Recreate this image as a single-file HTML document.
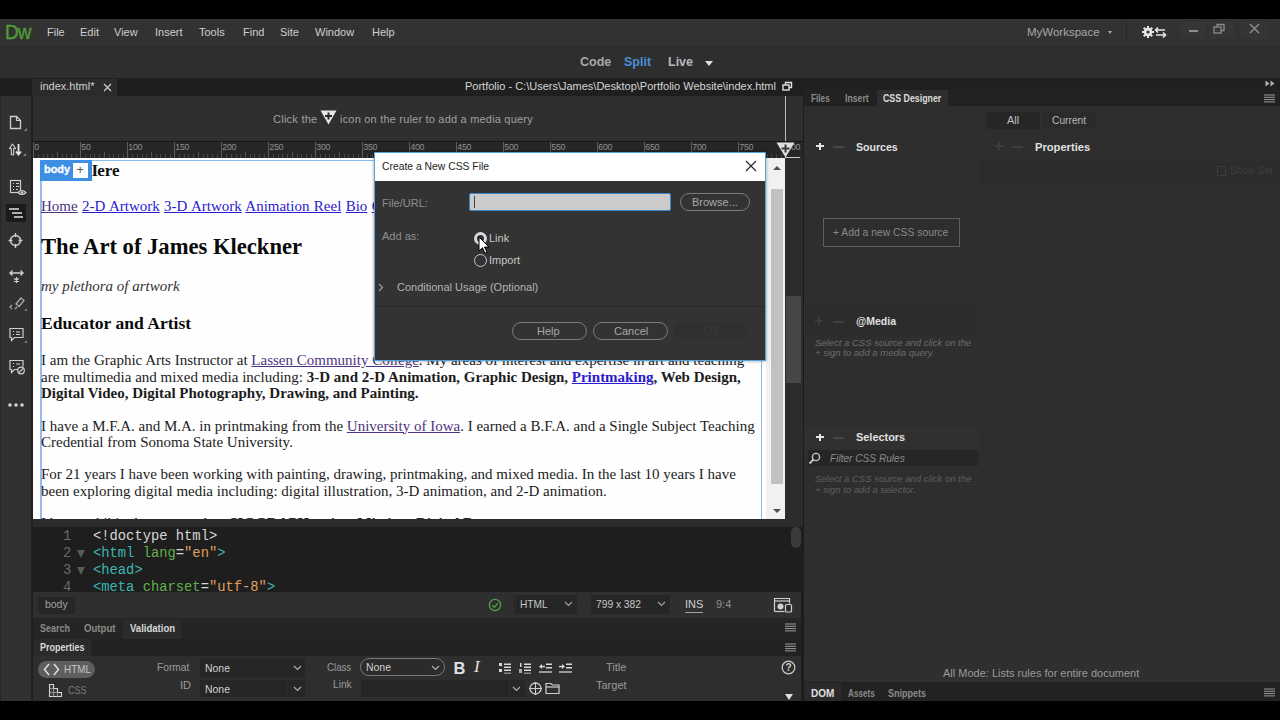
<!DOCTYPE html>
<html><head><meta charset="utf-8">
<style>
*{margin:0;padding:0;box-sizing:border-box}
html,body{width:1280px;height:720px;overflow:hidden;background:#000;font-family:"Liberation Sans",sans-serif;position:relative}
.a{position:absolute}
.t{position:absolute;white-space:nowrap;line-height:1}
.menu{color:#cfcfcf;font-size:11px;top:27px}
.tb{font-size:12.5px;font-weight:bold;top:56px}
.serif{font-family:"Liberation Serif",serif}
.dl{position:absolute;white-space:nowrap;left:8px;font-size:15px;line-height:1;color:#1c1c1c}
.dl a{color:#2a1ad0;text-decoration:underline}
.dl a.v{color:#4e3480}
.mono{font-family:"Liberation Mono",monospace}
.cl{position:absolute;left:61px;white-space:nowrap;font-size:13.8px;line-height:1;color:#d6d6d6}
.ln{position:absolute;white-space:nowrap;font-size:13.8px;line-height:1;color:#6a6a6a}
.tg{color:#3db5b0}.at{color:#62b04a}.vl{color:#e0a05a}
.ptab{font-size:10px;font-weight:bold;color:#8a8a8a}
.plab{font-size:11px;color:#9a9a9a}
.sel{position:absolute;background:#262626}
.ic{position:absolute}
</style></head><body>
<!-- BASE REGIONS -->
<div class="a" style="left:0;top:19px;width:1280px;height:27px;background:#323232"></div>
<div class="a" style="left:0;top:46px;width:1280px;height:32px;background:#2e2e2e"></div>
<div class="a" style="left:0;top:78px;width:32px;height:18px;background:#1f1f1f"></div><div class="a" style="left:0;top:96px;width:32px;height:605px;background:#313131"></div>
<div class="a" style="left:32px;top:78px;width:771px;height:18px;background:#1f1f1f"></div>
<div class="a" style="left:32px;top:96px;width:771px;height:46px;background:#2f2f2f"></div>
<div class="a" style="left:32px;top:142px;width:771px;height:16px;background:#262626"></div>
<div class="a" style="left:785px;top:158px;width:18px;height:361px;background:#2c2c2c"></div>
<div class="a" style="left:32px;top:519px;width:771px;height:8px;background:#2b2b2b"></div>
<div class="a" style="left:32px;top:527px;width:771px;height:65px;background:#1e1e1e"></div>
<div class="a" style="left:32px;top:592px;width:771px;height:26px;background:#2f2f2f"></div>
<div class="a" style="left:32px;top:618px;width:771px;height:21px;background:#252525"></div>
<div class="a" style="left:32px;top:639px;width:771px;height:17px;background:#222"></div>
<div class="a" style="left:32px;top:656px;width:771px;height:45px;background:#2e2e2e"></div>
<div class="a" style="left:801px;top:592px;width:2px;height:109px;background:#1c1c1c"></div>
<div class="a" style="left:803px;top:78px;width:477px;height:623px;background:#2e2e2e"></div>
<!-- MENU BAR -->
<div class="t" style="left:5px;top:21px;font-size:21px;color:#4f9c3a;letter-spacing:-1px;-webkit-text-stroke:0.4px #4f9c3a;transform:scaleX(0.9);transform-origin:0 0">Dw</div>
<div class="t menu" style="left:47px">File</div>
<div class="t menu" style="left:80px">Edit</div>
<div class="t menu" style="left:114px">View</div>
<div class="t menu" style="left:155px">Insert</div>
<div class="t menu" style="left:199px">Tools</div>
<div class="t menu" style="left:243px">Find</div>
<div class="t menu" style="left:280px">Site</div>
<div class="t menu" style="left:315px">Window</div>
<div class="t menu" style="left:372px">Help</div>
<div class="t menu" style="left:1027px;color:#a8a8a8;font-size:11.5px">MyWorkspace</div>
<div class="a" style="left:1108px;top:31px;width:0;height:0;border-left:2.5px solid transparent;border-right:2.5px solid transparent;border-top:3px solid #aaa"></div>
<div class="a" style="left:1126px;top:22px;width:1px;height:18px;background:#262626"></div>
<svg class="a" style="left:1141px;top:25px" width="26" height="14" viewBox="0 0 26 14">
 <g fill="#e6e6e6"><circle cx="7" cy="7" r="4.2"/>
 <rect x="6" y="1" width="2" height="12"/><rect x="1" y="6" width="12" height="2"/>
 <rect x="6" y="1" width="2" height="12" transform="rotate(45 7 7)"/><rect x="6" y="1" width="2" height="12" transform="rotate(-45 7 7)"/></g>
 <circle cx="7" cy="7" r="1.6" fill="#323232"/>
 <g stroke="#e6e6e6" stroke-width="1.6" fill="none"><path d="M15 5h9M17 2.5l-2.5 2.5 2.5 2.5M15 10h9M22 7.5l2.5 2.5-2.5 2.5"/></g>
</svg>
<div class="a" style="left:1181px;top:21px;width:25px;height:17px;background:#353535"></div>
<div class="a" style="left:1209px;top:21px;width:25px;height:17px;background:#353535"></div>
<div class="a" style="left:1241px;top:21px;width:28px;height:17px;background:#353535"></div>
<div class="a" style="left:1189px;top:30px;width:9px;height:2px;background:#8c8c8c"></div>
<svg class="a" style="left:1213px;top:23px" width="13" height="12" viewBox="0 0 13 12"><g fill="none" stroke="#8c8c8c" stroke-width="1.3"><rect x="1" y="4" width="7" height="6"/><path d="M4 4V1.5h7v6H8"/></g></svg>
<svg class="a" style="left:1249px;top:23px" width="11" height="11" viewBox="0 0 11 11"><path d="M1 1L10 10M10 1L1 10" stroke="#8c8c8c" stroke-width="1.5"/></svg>

<!-- TOOLBAR -->
<div class="t tb" style="left:580px;color:#a9a9a9">Code</div>
<div class="t tb" style="left:624px;color:#4b8fd6">Split</div>
<div class="t tb" style="left:668px;color:#b9b9b9">Live</div>
<div class="a" style="left:705px;top:61px;width:0;height:0;border-left:4.5px solid transparent;border-right:4.5px solid transparent;border-top:5px solid #e0e0e0"></div>

<!-- TAB BAR -->
<div class="a" style="left:32px;top:79px;width:85px;height:17px;background:#2b2b2b"></div>
<div class="t" style="left:40px;top:81px;font-size:11px;color:#d0d0d0">index.html*</div>
<svg class="a" style="left:103px;top:83px" width="9" height="9" viewBox="0 0 9 9"><path d="M1 1L8 8M8 1L1 8" stroke="#cfcfcf" stroke-width="1.2"/></svg>
<div class="t" style="left:465px;top:81px;font-size:11px;color:#d6d6d6">Portfolio - C:\Users\James\Desktop\Portfolio Website\index.html</div>
<svg class="a" style="left:782px;top:81px" width="11" height="11" viewBox="0 0 11 11"><g fill="none" stroke="#e0e0e0" stroke-width="1.4"><rect x="1" y="4" width="6" height="5"/><path d="M3.5 4V1.5h6v5H7"/></g></svg>

<!-- INFO BAR -->
<div class="t" style="left:273px;top:114px;font-size:11px;color:#a0a0a0;letter-spacing:0.25px">Click the</div>
<svg class="a" style="left:320px;top:110px" width="17" height="15" viewBox="0 0 17 15"><path d="M0.5 0.5H16.5L8.5 14.5Z" fill="#e6e6e6"/><path d="M8.5 2.5v7M5 6h7" stroke="#2b2b2b" stroke-width="2"/></svg>
<div class="t" style="left:340px;top:114px;font-size:11px;color:#a0a0a0;letter-spacing:0.2px">icon on the ruler to add a media query</div>
<div class="a" style="left:785px;top:96px;width:1px;height:50px;background:#bdbdbd"></div>
<!-- LEFT TOOLBAR -->
<div class="a" style="left:31px;top:96px;width:2px;height:605px;background:#1f1f1f"></div><div class="a" style="left:0;top:96px;width:1px;height:605px;background:#262626"></div>
<!-- file icon -->
<svg class="ic" style="left:8px;top:115px" width="22" height="18" viewBox="0 0 22 18"><path d="M2.5 1.5h6l4 4v8h-10z" fill="none" stroke="#cfcfcf" stroke-width="1.3"/><path d="M8.5 1.5v4h4" fill="none" stroke="#cfcfcf" stroke-width="1.1"/><path d="M19 13l-3 3h3z" fill="#8a8a8a"/></svg>
<!-- arrows -->
<svg class="ic" style="left:8px;top:142px" width="22" height="17" viewBox="0 0 22 17"><path d="M4.5 2L1.5 6.5H3.3V12.8H5.7V6.5H7.5Z" fill="none" stroke="#d6d6d6" stroke-width="1.1" stroke-linejoin="round"/><path d="M10.5 2v10M8 9.5l2.5 3 2.5-3" fill="none" stroke="#e6e6e6" stroke-width="1.8"/><path d="M18 11l-3 3h3z" fill="#8a8a8a"/></svg>
<!-- list + eye -->
<svg class="ic" style="left:8px;top:179px" width="20" height="18" viewBox="0 0 20 18"><rect x="2.5" y="1.5" width="10" height="12" fill="none" stroke="#cfcfcf" stroke-width="1.2"/><path d="M5 4.5h1M8 4.5h3M5 7.5h1M8 7.5h3M5 10.5h1M8 10.5h2" stroke="#cfcfcf" stroke-width="1.2"/><path d="M10 13.5q4-4 8 0q-4 4-8 0z" fill="#3a3a3a" stroke="#cfcfcf" stroke-width="1.1"/><circle cx="14" cy="13.5" r="1.3" fill="#cfcfcf"/></svg>
<!-- active: outline -->
<div class="a" style="left:6px;top:204px;width:20px;height:18px;background:#1b1b1b"></div>
<svg class="ic" style="left:6px;top:204px" width="20" height="18" viewBox="0 0 20 18"><path d="M3 5h10M6 9h10M8 13h9" stroke="#e0e0e0" stroke-width="1.6"/></svg>
<!-- crosshair -->
<svg class="ic" style="left:8px;top:231px" width="16" height="19" viewBox="0 0 16 19"><circle cx="7.5" cy="9.5" r="5" fill="none" stroke="#cfcfcf" stroke-width="1.4"/><path d="M7.5 2v4M7.5 13v4M0.5 9.5h4M10.5 9.5h4" stroke="#cfcfcf" stroke-width="1.4"/></svg>
<!-- arrows + asterisk -->
<svg class="ic" style="left:8px;top:269px" width="18" height="15" viewBox="0 0 18 15"><path d="M2 4h13M4.5 1.5L2 4l2.5 2.5M12.5 1.5L15 4l-2.5 2.5" fill="none" stroke="#cfcfcf" stroke-width="1.4"/><path d="M8.5 8v6M6 9.5l5 3M11 9.5l-5 3" stroke="#cfcfcf" stroke-width="1.2"/></svg>
<!-- brush -->
<svg class="ic" style="left:8px;top:295px" width="20" height="17" viewBox="0 0 20 17"><path d="M8 9l5-6 3 2.5-5 6z" fill="none" stroke="#a8a8a8" stroke-width="1.3"/><path d="M4 10l-2 2 2 2M7 14l2-2" fill="none" stroke="#a8a8a8" stroke-width="1.2"/><path d="M19 13l-3 3h3z" fill="#7a7a7a"/></svg>
<!-- comment -->
<svg class="ic" style="left:8px;top:327px" width="20" height="17" viewBox="0 0 20 17"><path d="M2 1.5h13v9H6.5L3.5 13.5v-3H2z" fill="none" stroke="#cfcfcf" stroke-width="1.2"/><path d="M5 4.5h1M5 7.5h1M8 5h4M8 7.5h4" stroke="#cfcfcf" stroke-width="1.2"/><path d="M19 13l-3 3h3z" fill="#7a7a7a"/></svg>
<!-- comment + circle -->
<svg class="ic" style="left:8px;top:359px" width="18" height="16" viewBox="0 0 18 16"><path d="M10 10.5H6.5L3.5 13.5v-3H2V1.5h13v6" fill="none" stroke="#cfcfcf" stroke-width="1.2"/><path d="M5 4.5h1M5 7.5h1M8 5h4" stroke="#cfcfcf" stroke-width="1.2"/><circle cx="13" cy="11.5" r="3.3" fill="none" stroke="#cfcfcf" stroke-width="1.2"/><path d="M11 13.5l4-4" stroke="#cfcfcf" stroke-width="1.1"/></svg>
<!-- dots -->
<svg class="ic" style="left:8px;top:402px" width="16" height="6" viewBox="0 0 16 6"><circle cx="2" cy="3" r="1.8" fill="#d0d0d0"/><circle cx="8" cy="3" r="1.8" fill="#d0d0d0"/><circle cx="14" cy="3" r="1.8" fill="#d0d0d0"/></svg>
<!-- RULER -->
<div class="a" style="left:32px;top:141px;width:771px;height:1px;background:#161616"></div>
<svg class="a" style="left:32px;top:142px" width="771" height="16" viewBox="0 0 771 16">
<line x1="1.5" y1="0" x2="1.5" y2="16" stroke="#5c5c5c" stroke-width="1"/>
<line x1="6.5" y1="12" x2="6.5" y2="16" stroke="#474747" stroke-width="1"/>
<line x1="11.5" y1="12" x2="11.5" y2="16" stroke="#474747" stroke-width="1"/>
<line x1="15.5" y1="12" x2="15.5" y2="16" stroke="#474747" stroke-width="1"/>
<line x1="20.5" y1="12" x2="20.5" y2="16" stroke="#474747" stroke-width="1"/>
<line x1="25.5" y1="10" x2="25.5" y2="16" stroke="#505050" stroke-width="1"/>
<line x1="30.5" y1="12" x2="30.5" y2="16" stroke="#474747" stroke-width="1"/>
<line x1="34.5" y1="12" x2="34.5" y2="16" stroke="#474747" stroke-width="1"/>
<line x1="39.5" y1="12" x2="39.5" y2="16" stroke="#474747" stroke-width="1"/>
<line x1="44.5" y1="12" x2="44.5" y2="16" stroke="#474747" stroke-width="1"/>
<line x1="48.5" y1="0" x2="48.5" y2="16" stroke="#5c5c5c" stroke-width="1"/>
<line x1="53.5" y1="12" x2="53.5" y2="16" stroke="#474747" stroke-width="1"/>
<line x1="58.5" y1="12" x2="58.5" y2="16" stroke="#474747" stroke-width="1"/>
<line x1="62.5" y1="12" x2="62.5" y2="16" stroke="#474747" stroke-width="1"/>
<line x1="67.5" y1="12" x2="67.5" y2="16" stroke="#474747" stroke-width="1"/>
<line x1="72.5" y1="10" x2="72.5" y2="16" stroke="#505050" stroke-width="1"/>
<line x1="77.5" y1="12" x2="77.5" y2="16" stroke="#474747" stroke-width="1"/>
<line x1="81.5" y1="12" x2="81.5" y2="16" stroke="#474747" stroke-width="1"/>
<line x1="86.5" y1="12" x2="86.5" y2="16" stroke="#474747" stroke-width="1"/>
<line x1="91.5" y1="12" x2="91.5" y2="16" stroke="#474747" stroke-width="1"/>
<line x1="95.5" y1="0" x2="95.5" y2="16" stroke="#5c5c5c" stroke-width="1"/>
<line x1="100.5" y1="12" x2="100.5" y2="16" stroke="#474747" stroke-width="1"/>
<line x1="105.5" y1="12" x2="105.5" y2="16" stroke="#474747" stroke-width="1"/>
<line x1="110.5" y1="12" x2="110.5" y2="16" stroke="#474747" stroke-width="1"/>
<line x1="114.5" y1="12" x2="114.5" y2="16" stroke="#474747" stroke-width="1"/>
<line x1="119.5" y1="10" x2="119.5" y2="16" stroke="#505050" stroke-width="1"/>
<line x1="124.5" y1="12" x2="124.5" y2="16" stroke="#474747" stroke-width="1"/>
<line x1="128.5" y1="12" x2="128.5" y2="16" stroke="#474747" stroke-width="1"/>
<line x1="133.5" y1="12" x2="133.5" y2="16" stroke="#474747" stroke-width="1"/>
<line x1="138.5" y1="12" x2="138.5" y2="16" stroke="#474747" stroke-width="1"/>
<line x1="142.5" y1="0" x2="142.5" y2="16" stroke="#5c5c5c" stroke-width="1"/>
<line x1="147.5" y1="12" x2="147.5" y2="16" stroke="#474747" stroke-width="1"/>
<line x1="152.5" y1="12" x2="152.5" y2="16" stroke="#474747" stroke-width="1"/>
<line x1="156.5" y1="12" x2="156.5" y2="16" stroke="#474747" stroke-width="1"/>
<line x1="161.5" y1="12" x2="161.5" y2="16" stroke="#474747" stroke-width="1"/>
<line x1="166.5" y1="10" x2="166.5" y2="16" stroke="#505050" stroke-width="1"/>
<line x1="171.5" y1="12" x2="171.5" y2="16" stroke="#474747" stroke-width="1"/>
<line x1="175.5" y1="12" x2="175.5" y2="16" stroke="#474747" stroke-width="1"/>
<line x1="180.5" y1="12" x2="180.5" y2="16" stroke="#474747" stroke-width="1"/>
<line x1="185.5" y1="12" x2="185.5" y2="16" stroke="#474747" stroke-width="1"/>
<line x1="189.5" y1="0" x2="189.5" y2="16" stroke="#5c5c5c" stroke-width="1"/>
<line x1="194.5" y1="12" x2="194.5" y2="16" stroke="#474747" stroke-width="1"/>
<line x1="199.5" y1="12" x2="199.5" y2="16" stroke="#474747" stroke-width="1"/>
<line x1="204.5" y1="12" x2="204.5" y2="16" stroke="#474747" stroke-width="1"/>
<line x1="208.5" y1="12" x2="208.5" y2="16" stroke="#474747" stroke-width="1"/>
<line x1="213.5" y1="10" x2="213.5" y2="16" stroke="#505050" stroke-width="1"/>
<line x1="218.5" y1="12" x2="218.5" y2="16" stroke="#474747" stroke-width="1"/>
<line x1="222.5" y1="12" x2="222.5" y2="16" stroke="#474747" stroke-width="1"/>
<line x1="227.5" y1="12" x2="227.5" y2="16" stroke="#474747" stroke-width="1"/>
<line x1="232.5" y1="12" x2="232.5" y2="16" stroke="#474747" stroke-width="1"/>
<line x1="236.5" y1="0" x2="236.5" y2="16" stroke="#5c5c5c" stroke-width="1"/>
<line x1="241.5" y1="12" x2="241.5" y2="16" stroke="#474747" stroke-width="1"/>
<line x1="246.5" y1="12" x2="246.5" y2="16" stroke="#474747" stroke-width="1"/>
<line x1="250.5" y1="12" x2="250.5" y2="16" stroke="#474747" stroke-width="1"/>
<line x1="255.5" y1="12" x2="255.5" y2="16" stroke="#474747" stroke-width="1"/>
<line x1="260.5" y1="10" x2="260.5" y2="16" stroke="#505050" stroke-width="1"/>
<line x1="265.5" y1="12" x2="265.5" y2="16" stroke="#474747" stroke-width="1"/>
<line x1="269.5" y1="12" x2="269.5" y2="16" stroke="#474747" stroke-width="1"/>
<line x1="274.5" y1="12" x2="274.5" y2="16" stroke="#474747" stroke-width="1"/>
<line x1="279.5" y1="12" x2="279.5" y2="16" stroke="#474747" stroke-width="1"/>
<line x1="283.5" y1="0" x2="283.5" y2="16" stroke="#5c5c5c" stroke-width="1"/>
<line x1="288.5" y1="12" x2="288.5" y2="16" stroke="#474747" stroke-width="1"/>
<line x1="293.5" y1="12" x2="293.5" y2="16" stroke="#474747" stroke-width="1"/>
<line x1="297.5" y1="12" x2="297.5" y2="16" stroke="#474747" stroke-width="1"/>
<line x1="302.5" y1="12" x2="302.5" y2="16" stroke="#474747" stroke-width="1"/>
<line x1="307.5" y1="10" x2="307.5" y2="16" stroke="#505050" stroke-width="1"/>
<line x1="312.5" y1="12" x2="312.5" y2="16" stroke="#474747" stroke-width="1"/>
<line x1="316.5" y1="12" x2="316.5" y2="16" stroke="#474747" stroke-width="1"/>
<line x1="321.5" y1="12" x2="321.5" y2="16" stroke="#474747" stroke-width="1"/>
<line x1="326.5" y1="12" x2="326.5" y2="16" stroke="#474747" stroke-width="1"/>
<line x1="330.5" y1="0" x2="330.5" y2="16" stroke="#5c5c5c" stroke-width="1"/>
<line x1="335.5" y1="12" x2="335.5" y2="16" stroke="#474747" stroke-width="1"/>
<line x1="340.5" y1="12" x2="340.5" y2="16" stroke="#474747" stroke-width="1"/>
<line x1="344.5" y1="12" x2="344.5" y2="16" stroke="#474747" stroke-width="1"/>
<line x1="349.5" y1="12" x2="349.5" y2="16" stroke="#474747" stroke-width="1"/>
<line x1="354.5" y1="10" x2="354.5" y2="16" stroke="#505050" stroke-width="1"/>
<line x1="359.5" y1="12" x2="359.5" y2="16" stroke="#474747" stroke-width="1"/>
<line x1="363.5" y1="12" x2="363.5" y2="16" stroke="#474747" stroke-width="1"/>
<line x1="368.5" y1="12" x2="368.5" y2="16" stroke="#474747" stroke-width="1"/>
<line x1="373.5" y1="12" x2="373.5" y2="16" stroke="#474747" stroke-width="1"/>
<line x1="377.5" y1="0" x2="377.5" y2="16" stroke="#5c5c5c" stroke-width="1"/>
<line x1="382.5" y1="12" x2="382.5" y2="16" stroke="#474747" stroke-width="1"/>
<line x1="387.5" y1="12" x2="387.5" y2="16" stroke="#474747" stroke-width="1"/>
<line x1="391.5" y1="12" x2="391.5" y2="16" stroke="#474747" stroke-width="1"/>
<line x1="396.5" y1="12" x2="396.5" y2="16" stroke="#474747" stroke-width="1"/>
<line x1="401.5" y1="10" x2="401.5" y2="16" stroke="#505050" stroke-width="1"/>
<line x1="406.5" y1="12" x2="406.5" y2="16" stroke="#474747" stroke-width="1"/>
<line x1="410.5" y1="12" x2="410.5" y2="16" stroke="#474747" stroke-width="1"/>
<line x1="415.5" y1="12" x2="415.5" y2="16" stroke="#474747" stroke-width="1"/>
<line x1="420.5" y1="12" x2="420.5" y2="16" stroke="#474747" stroke-width="1"/>
<line x1="424.5" y1="0" x2="424.5" y2="16" stroke="#5c5c5c" stroke-width="1"/>
<line x1="429.5" y1="12" x2="429.5" y2="16" stroke="#474747" stroke-width="1"/>
<line x1="434.5" y1="12" x2="434.5" y2="16" stroke="#474747" stroke-width="1"/>
<line x1="438.5" y1="12" x2="438.5" y2="16" stroke="#474747" stroke-width="1"/>
<line x1="443.5" y1="12" x2="443.5" y2="16" stroke="#474747" stroke-width="1"/>
<line x1="448.5" y1="10" x2="448.5" y2="16" stroke="#505050" stroke-width="1"/>
<line x1="453.5" y1="12" x2="453.5" y2="16" stroke="#474747" stroke-width="1"/>
<line x1="457.5" y1="12" x2="457.5" y2="16" stroke="#474747" stroke-width="1"/>
<line x1="462.5" y1="12" x2="462.5" y2="16" stroke="#474747" stroke-width="1"/>
<line x1="467.5" y1="12" x2="467.5" y2="16" stroke="#474747" stroke-width="1"/>
<line x1="471.5" y1="0" x2="471.5" y2="16" stroke="#5c5c5c" stroke-width="1"/>
<line x1="476.5" y1="12" x2="476.5" y2="16" stroke="#474747" stroke-width="1"/>
<line x1="481.5" y1="12" x2="481.5" y2="16" stroke="#474747" stroke-width="1"/>
<line x1="485.5" y1="12" x2="485.5" y2="16" stroke="#474747" stroke-width="1"/>
<line x1="490.5" y1="12" x2="490.5" y2="16" stroke="#474747" stroke-width="1"/>
<line x1="495.5" y1="10" x2="495.5" y2="16" stroke="#505050" stroke-width="1"/>
<line x1="500.5" y1="12" x2="500.5" y2="16" stroke="#474747" stroke-width="1"/>
<line x1="504.5" y1="12" x2="504.5" y2="16" stroke="#474747" stroke-width="1"/>
<line x1="509.5" y1="12" x2="509.5" y2="16" stroke="#474747" stroke-width="1"/>
<line x1="514.5" y1="12" x2="514.5" y2="16" stroke="#474747" stroke-width="1"/>
<line x1="518.5" y1="0" x2="518.5" y2="16" stroke="#5c5c5c" stroke-width="1"/>
<line x1="523.5" y1="12" x2="523.5" y2="16" stroke="#474747" stroke-width="1"/>
<line x1="528.5" y1="12" x2="528.5" y2="16" stroke="#474747" stroke-width="1"/>
<line x1="532.5" y1="12" x2="532.5" y2="16" stroke="#474747" stroke-width="1"/>
<line x1="537.5" y1="12" x2="537.5" y2="16" stroke="#474747" stroke-width="1"/>
<line x1="542.5" y1="10" x2="542.5" y2="16" stroke="#505050" stroke-width="1"/>
<line x1="547.5" y1="12" x2="547.5" y2="16" stroke="#474747" stroke-width="1"/>
<line x1="551.5" y1="12" x2="551.5" y2="16" stroke="#474747" stroke-width="1"/>
<line x1="556.5" y1="12" x2="556.5" y2="16" stroke="#474747" stroke-width="1"/>
<line x1="561.5" y1="12" x2="561.5" y2="16" stroke="#474747" stroke-width="1"/>
<line x1="565.5" y1="0" x2="565.5" y2="16" stroke="#5c5c5c" stroke-width="1"/>
<line x1="570.5" y1="12" x2="570.5" y2="16" stroke="#474747" stroke-width="1"/>
<line x1="575.5" y1="12" x2="575.5" y2="16" stroke="#474747" stroke-width="1"/>
<line x1="580.5" y1="12" x2="580.5" y2="16" stroke="#474747" stroke-width="1"/>
<line x1="584.5" y1="12" x2="584.5" y2="16" stroke="#474747" stroke-width="1"/>
<line x1="589.5" y1="10" x2="589.5" y2="16" stroke="#505050" stroke-width="1"/>
<line x1="594.5" y1="12" x2="594.5" y2="16" stroke="#474747" stroke-width="1"/>
<line x1="598.5" y1="12" x2="598.5" y2="16" stroke="#474747" stroke-width="1"/>
<line x1="603.5" y1="12" x2="603.5" y2="16" stroke="#474747" stroke-width="1"/>
<line x1="608.5" y1="12" x2="608.5" y2="16" stroke="#474747" stroke-width="1"/>
<line x1="612.5" y1="0" x2="612.5" y2="16" stroke="#5c5c5c" stroke-width="1"/>
<line x1="617.5" y1="12" x2="617.5" y2="16" stroke="#474747" stroke-width="1"/>
<line x1="622.5" y1="12" x2="622.5" y2="16" stroke="#474747" stroke-width="1"/>
<line x1="626.5" y1="12" x2="626.5" y2="16" stroke="#474747" stroke-width="1"/>
<line x1="631.5" y1="12" x2="631.5" y2="16" stroke="#474747" stroke-width="1"/>
<line x1="636.5" y1="10" x2="636.5" y2="16" stroke="#505050" stroke-width="1"/>
<line x1="641.5" y1="12" x2="641.5" y2="16" stroke="#474747" stroke-width="1"/>
<line x1="645.5" y1="12" x2="645.5" y2="16" stroke="#474747" stroke-width="1"/>
<line x1="650.5" y1="12" x2="650.5" y2="16" stroke="#474747" stroke-width="1"/>
<line x1="655.5" y1="12" x2="655.5" y2="16" stroke="#474747" stroke-width="1"/>
<line x1="659.5" y1="0" x2="659.5" y2="16" stroke="#5c5c5c" stroke-width="1"/>
<line x1="664.5" y1="12" x2="664.5" y2="16" stroke="#474747" stroke-width="1"/>
<line x1="669.5" y1="12" x2="669.5" y2="16" stroke="#474747" stroke-width="1"/>
<line x1="673.5" y1="12" x2="673.5" y2="16" stroke="#474747" stroke-width="1"/>
<line x1="678.5" y1="12" x2="678.5" y2="16" stroke="#474747" stroke-width="1"/>
<line x1="683.5" y1="10" x2="683.5" y2="16" stroke="#505050" stroke-width="1"/>
<line x1="688.5" y1="12" x2="688.5" y2="16" stroke="#474747" stroke-width="1"/>
<line x1="692.5" y1="12" x2="692.5" y2="16" stroke="#474747" stroke-width="1"/>
<line x1="697.5" y1="12" x2="697.5" y2="16" stroke="#474747" stroke-width="1"/>
<line x1="702.5" y1="12" x2="702.5" y2="16" stroke="#474747" stroke-width="1"/>
<line x1="706.5" y1="0" x2="706.5" y2="16" stroke="#5c5c5c" stroke-width="1"/>
<line x1="711.5" y1="12" x2="711.5" y2="16" stroke="#474747" stroke-width="1"/>
<line x1="716.5" y1="12" x2="716.5" y2="16" stroke="#474747" stroke-width="1"/>
<line x1="720.5" y1="12" x2="720.5" y2="16" stroke="#474747" stroke-width="1"/>
<line x1="725.5" y1="12" x2="725.5" y2="16" stroke="#474747" stroke-width="1"/>
<line x1="730.5" y1="10" x2="730.5" y2="16" stroke="#505050" stroke-width="1"/>
<line x1="735.5" y1="12" x2="735.5" y2="16" stroke="#474747" stroke-width="1"/>
<line x1="739.5" y1="12" x2="739.5" y2="16" stroke="#474747" stroke-width="1"/>
<line x1="744.5" y1="12" x2="744.5" y2="16" stroke="#474747" stroke-width="1"/>
<line x1="749.5" y1="12" x2="749.5" y2="16" stroke="#474747" stroke-width="1"/>
<line x1="753.5" y1="0" x2="753.5" y2="16" stroke="#5c5c5c" stroke-width="1"/>
</svg>
<div class="t" style="left:34.2px;top:142.5px;font-size:8.8px;color:#909090;letter-spacing:-0.2px">0</div>
<div class="t" style="left:81.2px;top:142.5px;font-size:8.8px;color:#909090;letter-spacing:-0.2px">50</div>
<div class="t" style="left:128.2px;top:142.5px;font-size:8.8px;color:#909090;letter-spacing:-0.2px">100</div>
<div class="t" style="left:175.2px;top:142.5px;font-size:8.8px;color:#909090;letter-spacing:-0.2px">150</div>
<div class="t" style="left:222.2px;top:142.5px;font-size:8.8px;color:#909090;letter-spacing:-0.2px">200</div>
<div class="t" style="left:269.2px;top:142.5px;font-size:8.8px;color:#909090;letter-spacing:-0.2px">250</div>
<div class="t" style="left:316.2px;top:142.5px;font-size:8.8px;color:#909090;letter-spacing:-0.2px">300</div>
<div class="t" style="left:363.2px;top:142.5px;font-size:8.8px;color:#909090;letter-spacing:-0.2px">350</div>
<div class="t" style="left:410.2px;top:142.5px;font-size:8.8px;color:#909090;letter-spacing:-0.2px">400</div>
<div class="t" style="left:457.2px;top:142.5px;font-size:8.8px;color:#909090;letter-spacing:-0.2px">450</div>
<div class="t" style="left:504.2px;top:142.5px;font-size:8.8px;color:#909090;letter-spacing:-0.2px">500</div>
<div class="t" style="left:551.2px;top:142.5px;font-size:8.8px;color:#909090;letter-spacing:-0.2px">550</div>
<div class="t" style="left:598.2px;top:142.5px;font-size:8.8px;color:#909090;letter-spacing:-0.2px">600</div>
<div class="t" style="left:645.2px;top:142.5px;font-size:8.8px;color:#909090;letter-spacing:-0.2px">650</div>
<div class="t" style="left:692.2px;top:142.5px;font-size:8.8px;color:#909090;letter-spacing:-0.2px">700</div>
<div class="t" style="left:739.2px;top:142.5px;font-size:8.8px;color:#909090;letter-spacing:-0.2px">750</div>
<div class="t" style="left:786.2px;top:142.5px;font-size:8.8px;color:#909090;letter-spacing:-0.2px">800</div>
<div class="a" style="left:785px;top:157px;width:15px;height:1px;background:#cfcfcf"></div>
<svg class="a" style="left:776px;top:142px" width="19" height="16" viewBox="0 0 19 16"><path d="M0.5 0.5H18.5L9.5 15.5Z" fill="#dedede"/><path d="M9.5 2.5v8M5.5 6.5h8" stroke="#3a3a3a" stroke-width="2"/></svg>
<!-- DOCUMENT -->
<div class="a serif" style="left:33px;top:158px;width:733px;height:361px;background:#fefefe;overflow:hidden">
 <div class="a" style="left:7px;top:2px;width:722px;height:400px;border:1px solid #8ab8f0;border-left:2px solid #94bdf0"></div>
 <div class="dl" style="top:3.8px;left:58.5px;font-size:17px;font-weight:bold;color:#111">I</div><div class="dl" style="top:3.8px;left:64.3px;font-size:17px;font-weight:bold;color:#111">ere</div>
 <div class="a" style="left:7px;top:2px;width:51.5px;height:21px;background:#3c8fe3"></div>
 <div class="t" style="left:11px;top:6px;font-size:11.5px;font-weight:bold;color:#fff;font-family:'Liberation Sans',sans-serif;-webkit-text-stroke:0.3px #fff;transform:scaleX(0.95);transform-origin:0 0">body</div>
 <div class="a" style="left:40px;top:5px;width:15px;height:14.5px;background:#fff"></div>
 <div class="t" style="left:43.5px;top:5.5px;font-size:12.5px;color:#555;font-family:'Liberation Sans',sans-serif">+</div>

 <div class="dl" id="nav" style="top:41px;word-spacing:0.6px"><a class="v">Home</a> <a>2-D Artwork</a> <a>3-D Artwork</a> <a>Animation Reel</a> <a>Bio</a> <a>Contact</a></div>
 <div class="dl" id="h1" style="top:78px;font-size:22.6px;font-weight:bold;color:#0a0a0a">The Art of James Kleckner</div>
 <div class="dl" id="it" style="top:121.3px;font-style:italic;color:#333">my plethora of artwork</div>
 <div class="dl" id="h2" style="top:157.2px;font-size:17.6px;font-weight:bold;color:#0a0a0a">Educator and Artist</div>
 <div class="dl" id="p1a" style="top:195px">I am the Graphic Arts Instructor at <a class="v">Lassen Community College</a>. My areas of interest and expertise in art and teaching</div>
 <div class="dl" id="p1b" style="top:211.5px">are multimedia and mixed media including: <b>3-D and 2-D Animation, Graphic Design, <a>Printmaking</a>, Web Design,</b></div>
 <div class="dl" id="p1c" style="top:228px"><b>Digital Video, Digital Photography, Drawing, and Painting.</b></div>
 <div class="dl" id="p2a" style="top:260.5px">I have a M.F.A. and M.A. in printmaking from the <a class="v">University of Iowa</a>. I earned a B.F.A. and a Single Subject Teaching</div>
 <div class="dl" id="p2b" style="top:277px">Credential from Sonoma State University.</div>
 <div class="dl" id="p3a" style="top:309px">For 21 years I have been working with painting, drawing, printmaking, and mixed media. In the last 10 years I have</div>
 <div class="dl" id="p3b" style="top:326px">been exploring digital media including: digital illustration, 3-D animation, and 2-D animation.</div>
 <div class="dl" id="p4a" style="top:357.5px">I have exhibited my artwork at <b>SIGGRAPH</b> and on <b>Mission: Digital Dreams</b></div>
</div>
<!-- doc scrollbar -->
<div class="a" style="left:766px;top:158px;width:19px;height:361px;background:#f1f1f1"></div>
<div class="a" style="left:771px;top:189px;width:12px;height:295px;background:#c1c1c1"></div>
<div class="a" style="left:773px;top:166px;width:0;height:0;border-left:4px solid transparent;border-right:4px solid transparent;border-bottom:4px solid #505050"></div>
<div class="a" style="left:773px;top:509px;width:0;height:0;border-left:4px solid transparent;border-right:4px solid transparent;border-top:4px solid #505050"></div>
<!-- splitter handle -->
<div class="a" style="left:786px;top:296px;width:15px;height:87px;background:#474747"></div>
<div class="a" style="left:803px;top:78px;width:1px;height:623px;background:#1c1c1c"></div>
<!-- CODE VIEW -->
<div class="mono">
<div class="ln" style="left:63px;top:530px">1</div>
<div class="ln" style="left:63px;top:547px">2</div>
<div class="ln" style="left:63px;top:564px">3</div>
<div class="a" style="left:77px;top:550px;width:0;height:0;border-left:4.5px solid transparent;border-right:4.5px solid transparent;border-top:8px solid #5a5a5a"></div>
<div class="a" style="left:77px;top:567px;width:0;height:0;border-left:4.5px solid transparent;border-right:4.5px solid transparent;border-top:8px solid #5a5a5a"></div>
<div class="cl" style="left:93px;top:530px">&lt;!doctype html&gt;</div>
<div class="cl" style="left:93px;top:547px"><span class="tg">&lt;html</span> <span class="at">lang</span>=<span class="vl">"en"</span><span class="tg">&gt;</span></div>
<div class="cl" style="left:93px;top:564px"><span class="tg">&lt;head&gt;</span></div>
<div class="a" style="left:32px;top:592px;width:771px;height:0;overflow:visible"></div>
</div>
<div class="a" style="left:32px;top:579px;width:771px;height:13px;overflow:hidden"><div class="cl mono" style="left:61px;top:2px"><span class="tg">&lt;meta</span> <span class="at">charset</span>=<span class="vl">"utf-8"</span><span class="tg">&gt;</span></div><div class="ln mono" style="left:31px;top:2px">4</div></div>
<div class="a" style="left:791px;top:527px;width:10px;height:21px;border-radius:5px;background:#3a3a3a"></div>
<!-- STATUS BAR -->
<div class="a" style="left:38px;top:597px;width:37px;height:17px;background:#262626;border-radius:2px"></div>
<div class="t" style="left:45px;top:599px;font-size:11px;color:#a0a0a0;transform:scaleX(0.95);transform-origin:0 0">body</div>
<svg class="ic" style="left:488px;top:598px" width="14" height="14" viewBox="0 0 14 14"><circle cx="7" cy="7" r="5.6" fill="none" stroke="#4fa04f" stroke-width="1.3"/><path d="M4.3 7.2l2 2 3.5-3.8" fill="none" stroke="#4fa04f" stroke-width="1.3"/></svg>
<div class="a" style="left:514px;top:595px;width:1px;height:19px;background:#222"></div>
<div class="sel" style="left:516px;top:595px;width:61px;height:19px"></div>
<div class="t" style="left:520px;top:599px;font-size:11px;color:#c8c8c8;transform:scaleX(0.92);transform-origin:0 0">HTML</div>
<svg class="ic" style="left:564px;top:601px" width="9" height="6" viewBox="0 0 9 6"><path d="M1 1l3.5 3.5L8 1" fill="none" stroke="#a0a0a0" stroke-width="1.2"/></svg>
<div class="sel" style="left:591px;top:595px;width:79px;height:19px"></div>
<div class="t" style="left:596px;top:599px;font-size:11px;color:#c8c8c8;transform:scaleX(0.93);transform-origin:0 0">799 x 382</div>
<svg class="ic" style="left:657px;top:601px" width="9" height="6" viewBox="0 0 9 6"><path d="M1 1l3.5 3.5L8 1" fill="none" stroke="#a0a0a0" stroke-width="1.2"/></svg>
<div class="t" style="left:685px;top:599px;font-size:11px;color:#d0d0d0">INS</div>
<div class="a" style="left:685px;top:612px;width:18px;height:1px;background:#a0a0a0"></div>
<div class="t" style="left:716px;top:599px;font-size:11px;color:#909090">9:4</div>
<svg class="ic" style="left:773px;top:597px" width="20" height="16" viewBox="0 0 20 16"><path d="M1.5 14.5V1.5h15v5" fill="none" stroke="#d0d0d0" stroke-width="1.2"/><path d="M1.5 4h15" stroke="#d0d0d0" stroke-width="1.2"/><circle cx="7.5" cy="9.5" r="3" fill="#d0d0d0"/><rect x="12.5" y="7.5" width="6" height="7.5" rx="1" fill="#2b2b2b" stroke="#d0d0d0" stroke-width="1.2"/><path d="M1.5 14.5h10" stroke="#d0d0d0" stroke-width="1.2"/></svg>
<!-- PANEL TABS -->
<div class="a" style="left:123px;top:620px;width:58px;height:19px;background:#2b2b2b"></div>
<div class="t ptab" style="left:40px;top:624px;transform:scaleX(0.9);transform-origin:0 0">Search</div>
<div class="t ptab" style="left:84px;top:624px;transform:scaleX(0.96);transform-origin:0 0">Output</div>
<div class="t ptab" style="left:130px;top:624px;color:#d8d8d8;transform:scaleX(0.955);transform-origin:0 0">Validation</div>
<svg class="ic" style="left:785px;top:623px" width="11" height="9" viewBox="0 0 11 9"><path d="M0 1h11M0 3.3h11M0 5.6h11M0 7.9h11" stroke="#9a9a9a" stroke-width="1"/></svg>
<!-- PROPERTIES -->
<div class="a" style="left:34px;top:639px;width:57px;height:17px;background:#2b2b2b"></div>
<div class="t ptab" style="left:40px;top:643px;color:#d8d8d8;transform:scaleX(0.9);transform-origin:0 0">Properties</div>
<svg class="ic" style="left:785px;top:643px" width="11" height="9" viewBox="0 0 11 9"><path d="M0 1h11M0 3.3h11M0 5.6h11M0 7.9h11" stroke="#9a9a9a" stroke-width="1"/></svg>
<div class="a" style="left:38px;top:661px;width:57px;height:17px;border-radius:9px;background:#5e5e5e"></div>
<svg class="ic" style="left:43px;top:662px" width="17" height="15" viewBox="0 0 17 15"><path d="M6 2L1.5 7.5 6 13M11 2l4.5 5.5L11 13" fill="none" stroke="#e0e0e0" stroke-width="1.5"/></svg>
<div class="t" style="left:64px;top:664px;font-size:11px;color:#c4c4c4;transform:scaleX(0.9);transform-origin:0 0">HTML</div>
<svg class="ic" style="left:48px;top:683px" width="14" height="14" viewBox="0 0 14 14"><path d="M1.5 1.5h4v4h4v4h4v4h-12z" fill="#3a3a3a" stroke="#d8d8d8" stroke-width="1.1"/><path d="M1.5 5.5h4v8M1.5 9.5h8v4" fill="none" stroke="#9a9a9a" stroke-width="0.9"/></svg>
<div class="t" style="left:68px;top:685px;font-size:11px;color:#7a7a7a;transform:scaleX(0.82);transform-origin:0 0">CSS</div>
<div class="t plab" style="left:157px;top:662px;transform:scaleX(0.93);transform-origin:0 0">Format</div>
<div class="t plab" style="left:180px;top:680px">ID</div>
<div class="sel" style="left:200px;top:659px;width:105px;height:18px"></div>
<div class="t" style="left:205px;top:663px;font-size:11px;color:#d0d0d0;transform:scaleX(0.95);transform-origin:0 0">None</div>
<svg class="ic" style="left:293px;top:665px" width="9" height="6" viewBox="0 0 9 6"><path d="M1 1l3.5 3.5L8 1" fill="none" stroke="#b0b0b0" stroke-width="1.2"/></svg>
<div class="sel" style="left:200px;top:680px;width:105px;height:17px"></div>
<div class="a" style="left:287px;top:680px;width:1px;height:17px;background:#2b2b2b"></div>
<div class="t" style="left:205px;top:684px;font-size:11px;color:#d0d0d0;transform:scaleX(0.95);transform-origin:0 0">None</div>
<svg class="ic" style="left:293px;top:686px" width="9" height="6" viewBox="0 0 9 6"><path d="M1 1l3.5 3.5L8 1" fill="none" stroke="#b0b0b0" stroke-width="1.2"/></svg>
<div class="t plab" style="left:327px;top:662px;transform:scaleX(0.88);transform-origin:0 0">Class</div>
<div class="t plab" style="left:333px;top:679px;transform:scaleX(0.92);transform-origin:0 0">Link</div>
<div class="a" style="left:360px;top:658px;width:85px;height:18px;border-radius:9px;border:1.3px solid #7a7a7a;background:#2b2b2b"></div>
<div class="t" style="left:366px;top:662px;font-size:11px;color:#d0d0d0;transform:scaleX(0.95);transform-origin:0 0">None</div>
<svg class="ic" style="left:431px;top:665px" width="9" height="6" viewBox="0 0 9 6"><path d="M1 1l3.5 3.5L8 1" fill="none" stroke="#b0b0b0" stroke-width="1.2"/></svg>
<div class="t" style="left:453.5px;top:660px;font-size:16.5px;font-weight:bold;color:#e0e0e0">B</div>
<div class="t" style="left:474px;top:658px;font-size:17px;font-style:italic;color:#e0e0e0;font-family:'Liberation Serif',serif">I</div>
<svg class="ic" style="left:498px;top:661.5px" width="76" height="15" viewBox="0 0 76 15"><g fill="#d8d8d8">
<rect x="1" y="1" width="3" height="3"/><rect x="6" y="1.5" width="7" height="1.5"/><rect x="6" y="4.5" width="7" height="1.5"/><rect x="1" y="7" width="3" height="3"/><rect x="6" y="7.5" width="7" height="1.5"/><rect x="6" y="10.5" width="7" height="1.5" fill="#888"/>
<rect x="22" y="1" width="1.5" height="4"/><rect x="26" y="1.5" width="7" height="1.5"/><rect x="26" y="4.5" width="7" height="1.5"/><rect x="21" y="7" width="3" height="4" fill="#aaa"/><rect x="26" y="7.5" width="7" height="1.5"/><rect x="26" y="10.5" width="7" height="1.5" fill="#888"/>
<path d="M41 4.5l3-2.5v5z"/><rect x="44" y="3.8" width="3" height="1.5"/><rect x="48" y="1.5" width="6" height="1.5"/><rect x="48" y="5" width="6" height="1.5"/><rect x="41" y="9" width="13" height="2" fill="#999"/>
<path d="M67 4.5l-3-2.5v5z"/><rect x="61" y="3.8" width="3" height="1.5"/><rect x="68" y="1.5" width="6" height="1.5"/><rect x="68" y="5" width="6" height="1.5"/><rect x="61" y="9" width="13" height="2" fill="#999"/>
</g></svg>
<div class="sel" style="left:361px;top:680px;width:148px;height:17px"></div>
<div class="sel" style="left:510px;top:680px;width:15px;height:17px"></div>
<svg class="ic" style="left:512px;top:686px" width="9" height="6" viewBox="0 0 9 6"><path d="M1 1l3.5 3.5L8 1" fill="none" stroke="#b0b0b0" stroke-width="1.2"/></svg>
<svg class="ic" style="left:528px;top:681px" width="15" height="15" viewBox="0 0 15 15"><circle cx="7.5" cy="7.5" r="5.5" fill="none" stroke="#d0d0d0" stroke-width="1.3"/><path d="M7.5 1v13M1 7.5h13" stroke="#d0d0d0" stroke-width="1.1"/></svg>
<svg class="ic" style="left:545px;top:681px" width="15" height="14" viewBox="0 0 15 14"><path d="M1 2.5h5l1.5 1.5h6.5v8.5H1z" fill="none" stroke="#d0d0d0" stroke-width="1.2"/><path d="M1 6h13" stroke="#d0d0d0" stroke-width="1.2"/></svg>
<div class="t plab" style="left:606px;top:662px">Title</div>
<div class="t plab" style="left:596px;top:680px">Target</div>
<div class="a" style="left:635px;top:659px;width:75px;height:19px;background:#2e2e2e"></div>
<div class="a" style="left:635px;top:680px;width:72px;height:18px;background:#2e2e2e"></div>
<svg class="ic" style="left:781px;top:660px" width="15" height="15" viewBox="0 0 15 15"><circle cx="7.5" cy="7.5" r="6.3" fill="none" stroke="#d0d0d0" stroke-width="1.2"/><text x="7.5" y="11.3" font-size="10" text-anchor="middle" fill="#d0d0d0" font-family="Liberation Sans" font-weight="bold">?</text></svg>
<div class="a" style="left:785px;top:694px;width:0;height:0;border-left:4.5px solid transparent;border-right:4.5px solid transparent;border-top:6px solid #e0e0e0"></div>
<!-- RIGHT PANEL -->
<div class="a" style="left:803px;top:78px;width:477px;height:12px;background:#202020"></div>
<div class="a" style="left:803px;top:90px;width:477px;height:16px;background:#222"></div>
<div class="a" style="left:877px;top:90px;width:71px;height:16px;background:#2e2e2e"></div>
<div class="t ptab" style="left:811px;top:94px;transform:scaleX(0.82);transform-origin:0 0">Files</div>
<div class="t ptab" style="left:845px;top:94px;transform:scaleX(0.87);transform-origin:0 0">Insert</div>
<div class="t ptab" style="left:883px;top:94px;color:#dcdcdc;transform:scaleX(0.88);transform-origin:0 0">CSS Designer</div>
<svg class="ic" style="left:1265px;top:80px" width="10" height="7" viewBox="0 0 10 7"><path d="M0.5 0.5l4 3-4 3zM5.5 0.5l4 3-4 3z" fill="#b0b0b0"/></svg>
<svg class="ic" style="left:1264px;top:94px" width="11" height="9" viewBox="0 0 11 9"><path d="M0 1h11M0 3.3h11M0 5.6h11M0 7.9h11" stroke="#9a9a9a" stroke-width="1"/></svg>
<!-- All / Current -->
<div class="a" style="left:987px;top:112px;width:53px;height:17px;background:#262626"></div>
<div class="a" style="left:1042px;top:112px;width:55px;height:17px;background:#2b2b2b"></div>
<div class="t" style="left:1007px;top:115px;font-size:11px;color:#c0c0c0">All</div>
<div class="t" style="left:1052px;top:115px;font-size:11px;color:#b8b8b8;transform:scaleX(0.93);transform-origin:0 0">Current</div>
<!-- Sources -->
<div class="a" style="left:804px;top:136px;width:176px;height:22px;background:#2e2e2e"></div>
<div class="a" style="left:833px;top:146px;width:11px;height:2px;background:#474747"></div>
<div class="t" style="left:856px;top:142px;font-size:11.5px;font-weight:bold;color:#e0e0e0;transform:scaleX(0.92);transform-origin:0 0">Sources</div>
<div class="a" style="left:981px;top:135px;width:1px;height:55px;background:#292929"></div>
<!-- Properties -->
<div class="a" style="left:1012px;top:146px;width:11px;height:2px;background:#404040"></div>
<div class="t" style="left:1035px;top:142px;font-size:11.5px;font-weight:bold;color:#e0e0e0;transform:scaleX(0.97);transform-origin:0 0">Properties</div>
<div class="a" style="left:982px;top:162px;width:298px;height:20px;background:#2c2c2c"></div>
<div class="a" style="left:1217px;top:166px;width:9px;height:10px;border:1px solid #3c3c3c"></div>
<div class="t" style="left:1230px;top:166px;font-size:10px;color:#3e3e3e">Show Set</div>
<!-- add source button -->
<div class="a" style="left:823px;top:218px;width:137px;height:29px;border:1px solid #5e5e5e"></div>
<div class="t" style="left:833px;top:227px;font-size:11px;color:#8a8a8a;letter-spacing:0px;transform:scaleX(0.94);transform-origin:0 0">+ Add a new CSS source</div>
<!-- @Media -->
<div class="a" style="left:805px;top:304px;width:173px;height:31px;background:#2c2c2c"></div>
<div class="a" style="left:833px;top:321px;width:11px;height:2px;background:#404040"></div>
<div class="t" style="left:856px;top:316px;font-size:10.5px;font-weight:bold;color:#e0e0e0">@Media</div>
<div class="t" style="left:815px;top:338px;font-size:9.5px;font-style:italic;color:#6c6c6c">Select a CSS source and click on the</div>
<div class="t" style="left:815px;top:348px;font-size:9.5px;font-style:italic;color:#6c6c6c">+ sign to add a media query.</div>
<!-- Selectors -->
<div class="a" style="left:806px;top:427px;width:174px;height:23px;background:#303030"></div>
<div class="a" style="left:833px;top:437px;width:11px;height:2px;background:#474747"></div>
<div class="t" style="left:856px;top:432px;font-size:11.5px;font-weight:bold;color:#e0e0e0;transform:scaleX(0.95);transform-origin:0 0">Selectors</div>
<div class="a" style="left:808px;top:450px;width:170px;height:16px;background:#262626"></div>
<svg class="ic" style="left:808px;top:452px" width="13" height="13" viewBox="0 0 13 13"><circle cx="8" cy="5" r="3.6" fill="none" stroke="#c8c8c8" stroke-width="1.4"/><path d="M5.5 7.5L1.5 11.5" stroke="#c8c8c8" stroke-width="1.8"/></svg>
<div class="t" style="left:830px;top:453px;font-size:11px;font-style:italic;color:#8c8c8c;transform:scaleX(0.92);transform-origin:0 0">Filter CSS Rules</div>
<div class="t" style="left:815px;top:474px;font-size:9.5px;font-style:italic;color:#5e5e5e">Select a CSS source and click on the</div>
<div class="t" style="left:815px;top:485px;font-size:9.5px;font-style:italic;color:#5e5e5e">+ sign to add a selector.</div>
<div class="a" style="left:815.8px;top:145.2px;width:8px;height:2px;background:#e6e6e6"></div><div class="a" style="left:818.8px;top:142.6px;width:2px;height:7.2px;background:#e6e6e6"></div>
<div class="a" style="left:994.8px;top:145.0px;width:8px;height:2px;background:#3c3c3c"></div><div class="a" style="left:997.8px;top:142.4px;width:2px;height:7.2px;background:#3c3c3c"></div>
<div class="a" style="left:815.3px;top:320.0px;width:8px;height:2px;background:#3c3c3c"></div><div class="a" style="left:818.3px;top:317.4px;width:2px;height:7.2px;background:#3c3c3c"></div>
<div class="a" style="left:815.8px;top:436.2px;width:8px;height:2px;background:#e6e6e6"></div><div class="a" style="left:818.8px;top:433.6px;width:2px;height:7.2px;background:#e6e6e6"></div>
<!-- bottom status -->
<div class="a" style="left:804px;top:663px;width:476px;height:19px;background:#2f2f2f"></div>
<div class="t" style="left:943px;top:668px;font-size:11px;color:#9a9a9a">All Mode: Lists rules for entire document</div>
<div class="a" style="left:803px;top:682px;width:477px;height:19px;background:#222"></div>
<div class="a" style="left:805px;top:683px;width:36px;height:18px;background:#2b2b2b"></div>
<div class="t ptab" style="left:811px;top:689px;color:#e0e0e0">DOM</div>
<div class="t ptab" style="left:848px;top:689px;transform:scaleX(0.82);transform-origin:0 0">Assets</div>
<div class="t ptab" style="left:888px;top:689px;transform:scaleX(0.9);transform-origin:0 0">Snippets</div>
<svg class="ic" style="left:1264px;top:688px" width="11" height="9" viewBox="0 0 11 9"><path d="M0 1h11M0 3.3h11M0 5.6h11M0 7.9h11" stroke="#9a9a9a" stroke-width="1"/></svg>
<!-- DIALOG -->
<div class="a" style="left:374px;top:152px;width:392px;height:209px;background:#333333;border:1px solid #4fa3e0;box-shadow:0 0 3px rgba(0,0,0,0.4)"></div>
<div class="a" style="left:375px;top:153px;width:390px;height:28px;background:#ffffff"></div>
<div class="t" style="left:382px;top:161px;font-size:11.5px;color:#222;transform:scaleX(0.9);transform-origin:0 0">Create a New CSS File</div>
<svg class="ic" style="left:745px;top:160px" width="12" height="12" viewBox="0 0 12 12"><path d="M1 1L11 11M11 1L1 11" stroke="#222" stroke-width="1.1"/></svg>
<div class="t" style="left:382px;top:198px;font-size:11px;color:#8e8e8e">File/URL:</div>
<div class="a" style="left:469px;top:193px;width:202px;height:18px;background:#cbcbcb;border:1px solid #3a85cc;border-radius:2px"></div>
<div class="a" style="left:474px;top:196px;width:1px;height:12px;background:#444"></div>
<div class="a" style="left:680px;top:193px;width:70px;height:18px;border:1.3px solid #7c7c7c;border-radius:9px"></div>
<div class="t" style="left:692px;top:197px;font-size:11px;color:#a8a8a8;letter-spacing:0px">Browse...</div>
<div class="t" style="left:382px;top:231px;font-size:11px;color:#8e8e8e">Add as:</div>
<div class="a" style="left:474px;top:232px;width:13px;height:13px;border-radius:50%;border:3px solid #d8d8d8;background:#333"></div>
<div class="t" style="left:489px;top:233px;font-size:11px;color:#c8c8c8">Link</div>
<div class="a" style="left:474px;top:254px;width:13px;height:13px;border-radius:50%;border:1.2px solid #c8c8c8"></div>
<div class="t" style="left:489px;top:255px;font-size:11px;color:#c8c8c8">Import</div>
<!-- cursor -->
<svg class="ic" style="left:478px;top:236px" width="12" height="19" viewBox="0 0 12 19"><path d="M1 1v14l3.5-3.2 2.5 5.5 2-1-2.4-5.3H11z" fill="#fff" stroke="#000" stroke-width="1"/></svg>
<svg class="ic" style="left:378px;top:283px" width="6" height="9" viewBox="0 0 6 9"><path d="M1 1l3.5 3.5L1 8" fill="none" stroke="#9a9a9a" stroke-width="1.2"/></svg>
<div class="t" style="left:397px;top:282px;font-size:11px;color:#b4b4b4;letter-spacing:0px">Conditional Usage (Optional)</div>
<div class="a" style="left:375px;top:306px;width:390px;height:1px;background:#2a2a2a"></div>
<div class="a" style="left:512px;top:322px;width:75px;height:18px;border:1.3px solid #7c7c7c;border-radius:9px"></div>
<div class="t" style="left:537px;top:326px;font-size:11px;color:#a8a8a8">Help</div>
<div class="a" style="left:593px;top:322px;width:75px;height:18px;border:1.3px solid #7c7c7c;border-radius:9px"></div>
<div class="t" style="left:614px;top:326px;font-size:11px;color:#a8a8a8">Cancel</div>
<div class="a" style="left:674px;top:322px;width:74px;height:18px;background:#303030;border-radius:9px"></div>
<div class="t" style="left:704px;top:326px;font-size:11px;color:#383838">OK</div>
</body></html>
